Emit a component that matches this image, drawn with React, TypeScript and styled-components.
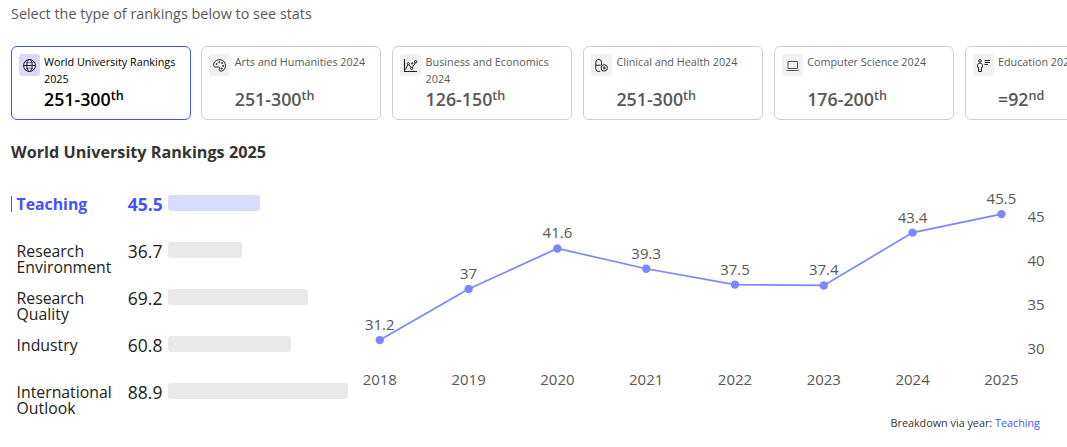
import type { ReactNode } from 'react';
import styled, { createGlobalStyle, css } from 'styled-components';

const colors = {
  ACCENT: '#4353ff',
  ACCENT_LIGHT: '#d9dbff',
  BLACK: '#000',
  BORDER: '#cfcfcf',
  GREY: '#585858',
  INK: '#222',
  LIGHT_GREY: '#f2f2f2',
  LILAC: '#dfd6ff',
  LINE: '#7c87ff',
  TRACK: '#e9e9e9',
  WHITE: '#fff',
};

const GlobalStyle = createGlobalStyle`
  * {
    box-sizing: border-box;
  }

  body {
    background: ${colors.WHITE};
    font-family: 'Open Sans', 'Noto Sans', sans-serif;
    margin: 0;
    overflow: hidden;
  }
`;

const S = {
  Page: styled.main`
    height: 447px;
    overflow: hidden;
    padding: 4px 0 0 10.6px;
  `,

  Intro: styled.p`
    color: ${colors.GREY};
    font-size: 14.4px;
    line-height: 20px;
    margin: 0 0 22px;
    padding-left: 0.4px;
  `,

  Cards: styled.div`
    display: flex;
    gap: 10.8px;
  `,

  Card: styled.button<{ $isSelected: boolean }>`
    all: unset;
    border: 1px solid ${({ $isSelected }) => ($isSelected ? colors.ACCENT : colors.BORDER)};
    border-radius: 6px;
    box-sizing: border-box;
    color: ${({ $isSelected }) => ($isSelected ? colors.BLACK : colors.GREY)};
    cursor: pointer;
    display: grid;
    flex: 0 0 180px;
    gap: 0 4px;
    grid-template-columns: 21px 1fr;
    grid-template-rows: 34px 1fr;
    height: 74px;
    padding: 6px 7px;
  `,

  IconWrapper: styled.span<{ $isSelected: boolean }>`
    align-items: center;
    background-color: ${({ $isSelected }) => ($isSelected ? colors.LILAC : colors.LIGHT_GREY)};
    border-radius: 3px;
    color: ${colors.INK};
    display: flex;
    height: 22px;
    justify-content: center;
    margin-top: 1px;
    width: 21px;
  `,

  CardTitle: styled.span`
    font-size: 10.8px;
    line-height: 17px;
    padding-left: 0.4px;
  `,

  Rank: styled.span`
    font-size: 17.8px;
    font-weight: 600;
    grid-column: 2;
    line-height: 24px;
    padding-left: 0.4px;
    white-space: nowrap;

    sup {
      font-size: 12.6px;
      line-height: 0;
      position: relative;
      top: 1px;
    }
  `,

  Heading: styled.h2`
    color: #333;
    font-size: 16.2px;
    font-weight: 700;
    line-height: 24px;
    margin: 20px 0 22px;
    padding-left: 0.4px;
  `,

  Content: styled.section`
    display: flex;
  `,

  Breakdown: styled.ul`
    flex: 0 0 345.4px;
    list-style: none;
    margin: 0;
    padding: 10px 0 0 0.4px;
  `,

  Item: styled.li<{ $isSelected: boolean }>`
    align-items: start;
    color: ${colors.INK};
    display: grid;
    grid-template-columns: 111px 46px 180px;
    height: 47px;

    ${({ $isSelected }) =>
      $isSelected &&
      css`
        color: ${colors.ACCENT};
        font-weight: 700;
      `}
  `,

  ItemLabel: styled.span<{ $isSelected: boolean }>`
    border-left: 1px solid ${({ $isSelected }) => ($isSelected ? colors.ACCENT : 'transparent')};
    font-size: 15.8px;
    line-height: 16px;
    padding-left: 4.6px;
  `,

  ItemValue: styled.span`
    font-size: 17.5px;
    line-height: 16px;
    padding-left: 5.8px;
  `,

  Bar: styled.span<{ $isSelected: boolean }>`
    background-color: ${({ $isSelected }) => ($isSelected ? colors.ACCENT_LIGHT : colors.TRACK)};
    border-radius: 3px;
    height: 16px;
    margin-top: -0.6px;
  `,

  Chart: styled.svg`
    display: block;
    fill: ${colors.GREY};
    font-size: 15px;
    text-anchor: middle;
  `,

  Footer: styled.p`
    color: #333;
    font-size: 10.8px;
    line-height: 16px;
    margin: 11px 27px 0 0;
    text-align: right;
  `,

  Link: styled.a`
    color: ${colors.ACCENT};
    cursor: pointer;
  `,
};

function Icon({ children }: { children: ReactNode }) {
  return (
    <svg width="15" height="15" viewBox="0 0 15 15" fill="none" stroke="currentColor" strokeWidth="1">
      {children}
    </svg>
  );
}

const cards = [
  {
    name: 'World University Rankings 2025',
    rank: '251-300',
    suffix: 'th',
    icon: (
      <>
        <circle cx="7.5" cy="7.5" r="6" />
        <ellipse cx="7.5" cy="7.5" rx="2.7" ry="6" />
        <path d="M1.5 7.5h12" />
        <path d="M2.8 3.8c2.6 1.3 6.8 1.3 9.4 0M2.8 11.2c2.6-1.3 6.8-1.3 9.4 0" strokeWidth=".5" />
      </>
    ),
  },
  {
    name: 'Arts and Humanities 2024',
    rank: '251-300',
    suffix: 'th',
    icon: (
      <>
        <path d="M7.3 9.3C6 8.5 4.3 9.6 3 9.1 1.5 8.5 1.1 6.5 2.2 4.7 3.5 2.5 5.7 1.5 8 1.7c3.3.2 5.5 2.7 5.5 5.7 0 3.2-2 5.8-4.3 5.8-2.4 0-2.2-1.5-1.7-2.5.2-.6.2-1.1-.2-1.4z" />
        <circle cx="4.6" cy="6" r=".6" />
        <circle cx="7.3" cy="4.2" r=".6" />
        <circle cx="10.2" cy="5" r=".6" />
        <circle cx="11.1" cy="7.9" r=".6" />
        <circle cx="9.7" cy="10.6" r=".6" />
      </>
    ),
  },
  {
    name: 'Business and Economics 2024',
    rank: '126-150',
    suffix: 'th',
    icon: (
      <>
        <path d="M1.5 1v12.5H14" strokeWidth="1.2" />
        <path d="M2.5 11.5l2.2-4.800M6 6.600l2 3M9.500 9.300l2.800-4.500" />
        <circle cx="5.3" cy="5.7" r="1.1" />
        <circle cx="8.7" cy="10.3" r="1.1" />
        <circle cx="12.6" cy="3.7" r="1.2" />
        <circle cx="9.2" cy="5.4" r=".7" />
      </>
    ),
  },
  {
    name: 'Clinical and Health 2024',
    rank: '251-300',
    suffix: 'th',
    icon: (
      <>
        <path d="M7.6 7V4.3a2.9 2.9 0 0 0-5.8 0v6.4a2.9 2.9 0 0 0 4.3 2.5M1.8 7.2h5" />
        <circle cx="10.2" cy="9.9" r="3.2" />
        <path d="M10.2 8.4v3M8.7 9.9h3" />
      </>
    ),
  },
  {
    name: 'Computer Science 2024',
    rank: '176-200',
    suffix: 'th',
    icon: <path d="M3 3.5h9.5v7H3zM1.5 12.5h12" stroke="#555" />,
  },
  {
    name: 'Education 2024',
    rank: '=92',
    suffix: 'nd',
    icon: (
      <>
        <circle cx="4" cy="2.9" r="1.3" />
        <path d="M4 5.2C2.5 5.2 1.5 6 1.5 7.2v2h1v4.3h3V9.2h1v-2C6.5 6 5.5 5.2 4 5.2z" />
        <path d="M8.5 2.5H14M8.5 4.5H14M8.5 6.5H12" />
      </>
    ),
  },
];

const items = [
  { name: 'Teaching', value: 45.5 },
  { name: 'Research Environment', value: 36.7 },
  { name: 'Research Quality', value: 69.2 },
  { name: 'Industry', value: 60.8 },
  { name: 'International Outlook', value: 88.9 },
];

const history = [
  { year: 2018, score: 31.2 },
  { year: 2019, score: 37 },
  { year: 2020, score: 41.6 },
  { year: 2021, score: 39.3 },
  { year: 2022, score: 37.5 },
  { year: 2023, score: 37.4 },
  { year: 2024, score: 43.4 },
  { year: 2025, score: 45.5 },
];

const ticks = [45, 40, 35, 30];
const maxValue = 88.9;

const getX = (index: number) => 23.8 + index * 88.8;
const getY = (score: number) => 32.5 + (45 - score) * 8.81;

function HistoryChart() {
  return (
    <S.Chart width="711" height="218" viewBox="0 0 711 218">
      <polyline
        points={history.map(({ score }, index) => `${getX(index)},${getY(score)}`).join(' ')}
        fill="none"
        stroke={colors.LINE}
        strokeWidth="1.7"
      />
      {history.map(({ year, score }, index) => (
        <g key={year}>
          <circle cx={getX(index)} cy={getY(score)} r="4.2" fill={colors.LINE} />
          <text x={getX(index)} y={getY(score) - 10}>
            {score}
          </text>
          <text x={getX(index)} y="199">
            {year}
          </text>
        </g>
      ))}
      {ticks.map((tick) => (
        <text key={tick} x="680" y={getY(tick) + 3.8}>
          {tick}
        </text>
      ))}
    </S.Chart>
  );
}

export default function App() {
  return (
    <S.Page>
      <GlobalStyle />
      <S.Intro>Select the type of rankings below to see stats</S.Intro>
      <S.Cards>
        {cards.map((card, index) => (
          <S.Card key={card.name} type="button" $isSelected={index === 0}>
            <S.IconWrapper $isSelected={index === 0}>
              <Icon>{card.icon}</Icon>
            </S.IconWrapper>
            <S.CardTitle>{card.name}</S.CardTitle>
            <S.Rank>
              {card.rank}
              <sup>{card.suffix}</sup>
            </S.Rank>
          </S.Card>
        ))}
      </S.Cards>
      <S.Heading>World University Rankings 2025</S.Heading>
      <S.Content>
        <S.Breakdown>
          {items.map((item, index) => (
            <S.Item key={item.name} $isSelected={index === 0}>
              <S.ItemLabel $isSelected={index === 0}>{item.name}</S.ItemLabel>
              <S.ItemValue>{item.value}</S.ItemValue>
              <S.Bar $isSelected={index === 0} style={{ width: `${(item.value / maxValue) * 100}%` }} />
            </S.Item>
          ))}
        </S.Breakdown>
        <div>
          <HistoryChart />
          <S.Footer>
            Breakdown via year: <S.Link>Teaching</S.Link>
          </S.Footer>
        </div>
      </S.Content>
    </S.Page>
  );
}
